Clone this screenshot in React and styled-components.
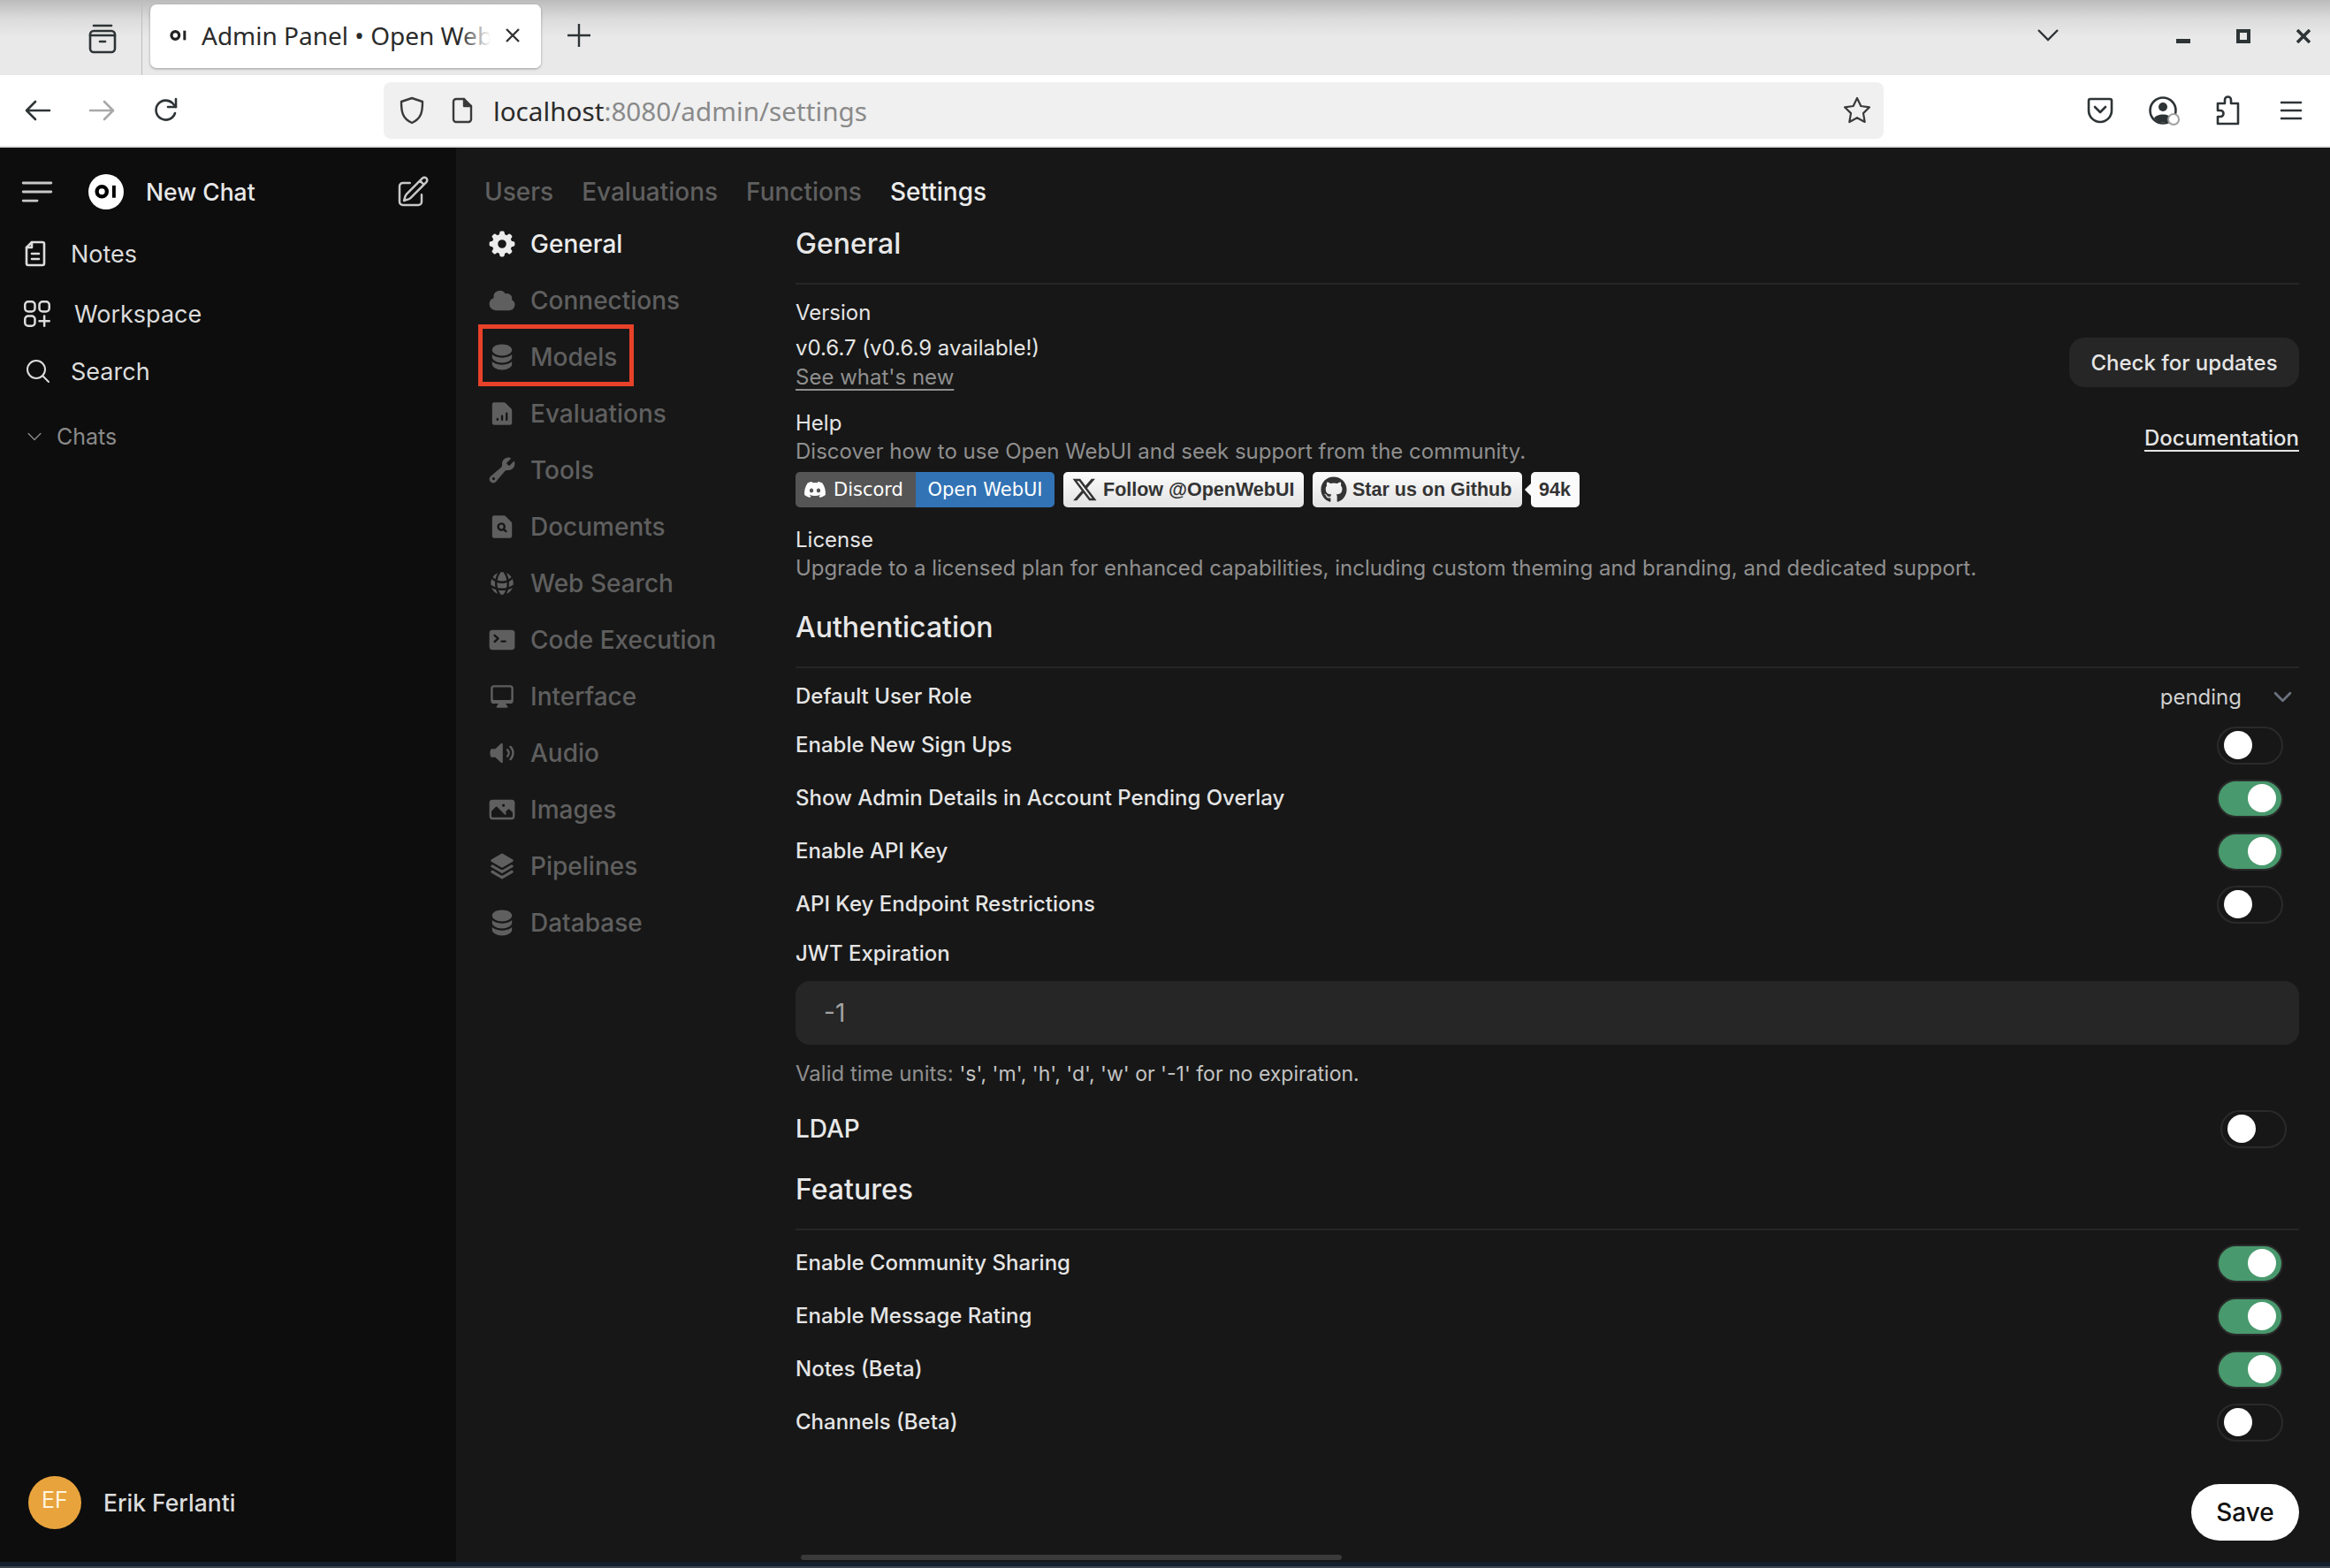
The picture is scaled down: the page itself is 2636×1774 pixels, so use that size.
import React from "react";
import styled, { createGlobalStyle } from "styled-components";
import {
  HiMiniCog8Tooth,
  HiMiniCloud,
  HiMiniCircleStack,
  HiMiniDocumentChartBar,
  HiMiniWrench,
  HiMiniDocumentMagnifyingGlass,
  HiMiniGlobeAlt,
  HiMiniCommandLine,
  HiMiniComputerDesktop,
  HiMiniSpeakerWave,
  HiMiniPhoto,
  HiMiniSquare3Stack3D,
  HiOutlineBars3BottomLeft,
  HiOutlinePencilSquare,
  HiOutlineMagnifyingGlass,
  HiOutlineChevronDown,
  HiOutlineSquaresPlus,
} from "react-icons/hi2";
import { FaDiscord, FaXTwitter, FaGithub } from "react-icons/fa6";

const GlobalStyle = createGlobalStyle`
  html, body { margin: 0; padding: 0; background: #171717; }
  * { box-sizing: border-box; }
  body { font-family: Inter, "Liberation Sans", sans-serif; }
`;

const Page = styled.div`
  width: 2636px;
  height: 1774px;
  display: flex;
  flex-direction: column;
  overflow: hidden;
`;

/* browser chrome */
const TitleBar = styled.div`
  height: 85px;
  display: flex;
  background: linear-gradient(#bcbcbc 0, #dcdcdc 22px, #e9e9e9 42px, #e9e9e9 100%);
  color: #2e3436;
`;

const TabGroups = styled.div`
  width: 161px;
  height: 85px;
  padding: 26px 0 0 98px;
  border-right: 1px solid #bdbdbd;
`;

const Tab = styled.div`
  position: relative;
  width: 442px;
  height: 72px;
  margin: 5px 0 0 9px;
  padding: 0 0 3px 22px;
  display: flex;
  align-items: center;
  gap: 16px;
  background: #fff;
  border-radius: 7px;
  box-shadow: 0 1px 3px rgba(0, 0, 0, 0.35);
  font-family: "Noto Sans", sans-serif;
  font-size: 28px;
  color: #2b2b2b;
  white-space: nowrap;
  overflow: hidden;
`;

const TabFade = styled.div`
  position: absolute;
  top: 0;
  right: 0;
  width: 92px;
  height: 100%;
  padding: 0 23px 3px 0;
  display: flex;
  align-items: center;
  justify-content: flex-end;
  background: linear-gradient(to right, rgba(255, 255, 255, 0), #fff 38%);
`;

const NewTab = styled.div`
  width: 88px;
  padding: 27px 0 0 30px;
`;

const TitleRight = styled.div`
  flex: 1;
  display: flex;
  justify-content: flex-end;
  align-items: flex-start;
  padding: 33px 22px 0 0;
  gap: 52px;
`;

const AllTabs = styled.div`
  margin-right: 81px;
  height: 14px;
  display: flex;
`;

const WinButton = styled.div`
  width: 16px;
  height: 16px;
  display: flex;
`;

const Toolbar = styled.div`
  height: 80px;
  background: #fff;
  display: flex;
  align-items: center;
  color: #2e3436;
`;

const NavIcons = styled.div`
  width: 434px;
  padding-left: 28px;
  display: flex;
  gap: 42px;
  align-items: center;
`;

const UrlBar = styled.div`
  width: 1697px;
  height: 64px;
  background: #f0f0f0;
  border-radius: 8px;
  display: flex;
  align-items: center;
  padding: 0 14px 0 17px;
  font-family: "Noto Sans", sans-serif;
  font-size: 29.7px;
  color: #8a8a8a;
`;

const UrlHost = styled.span`
  color: #2b2b2b;
`;

const UrlText = styled.div`
  flex: 1;
  margin-left: 23px;
`;

const PageIcon = styled.div`
  margin-left: 30px;
  display: flex;
`;

const ToolbarRight = styled.div`
  flex: 1;
  display: flex;
  justify-content: flex-end;
  padding-right: 8px;
`;

const ToolCell = styled.div`
  width: 72px;
  display: flex;
  align-items: center;
  justify-content: center;
`;

const ChromeLine = styled.div`
  height: 2px;
  background: #e0e0e0;
`;

/* app */
const Body = styled.div`
  height: 1600px;
  display: flex;
`;

const Sidebar = styled.aside`
  width: 516px;
  background: #0d0d0d;
  display: flex;
  flex-direction: column;
  color: #e5e5e5;
`;

const SideHead = styled.div`
  height: 100px;
  display: flex;
  align-items: center;
  padding: 0 29px 0 19px;
  color: #c8c8c8;
`;

const Logo = styled.div`
  width: 40px;
  height: 40px;
  margin-left: 35px;
  border-radius: 50%;
  background: #fff;
  display: flex;
  align-items: center;
  justify-content: center;
`;

const NewChat = styled.div`
  flex: 1;
  margin-left: 25px;
  font-size: 26.5px;
  font-weight: 500;
  color: #e8e8e8;
`;

const SideItem = styled.div`
  height: 40px;
  margin-top: ${({ $mt }) => $mt || 0}px;
  display: flex;
  align-items: center;
  padding-left: ${({ $pl }) => $pl || 28}px;
  gap: ${({ $gap }) => $gap}px;
  font-size: 27px;
  color: ${({ $dim }) => ($dim ? "#a3a3a3" : "#dcdcdc")};
  svg { flex: none; }
`;

const ChatsHead = styled.div`
  height: 40px;
  margin-top: 34px;
  padding-left: 28px;
  display: flex;
  align-items: center;
  gap: 14px;
  font-size: 25px;
  color: #8a8a8a;
`;

const SideSpacer = styled.div`
  flex: 1;
`;

const UserRow = styled.div`
  height: 60px;
  margin-bottom: 37px;
  padding-left: 32px;
  display: flex;
  align-items: center;
  gap: 25px;
  font-size: 26.5px;
  font-weight: 500;
  color: #dcdcdc;
`;

const Avatar = styled.div`
  width: 60px;
  height: 60px;
  border-radius: 50%;
  background: #e8a33c;
  color: #fff3dd;
  font-size: 25px;
  font-weight: 400;
  display: flex;
  align-items: center;
  justify-content: center;
  padding-bottom: 6px;
`;

const Main = styled.main`
  flex: 1;
  position: relative;
  background: #171717;
  padding: 0 35px 0 32px;
  display: flex;
  flex-direction: column;
`;

const TopTabs = styled.nav`
  height: 77px;
  padding-top: 32px;
  display: flex;
  gap: 32px;
  font-size: 28px;
  line-height: 36px;
  font-weight: 500;
`;

const TopTab = styled.div`
  color: ${({ $active }) => ($active ? "#ececec" : "#5f5f5f")};
`;

const Columns = styled.div`
  flex: 1;
  display: flex;
`;

const SettingsNav = styled.div`
  width: 352px;
  display: flex;
  flex-direction: column;
`;

const NavItem = styled.div`
  position: relative;
  height: 64px;
  display: flex;
  align-items: center;
  padding-left: 4px;
  gap: 16px;
  font-size: 28px;
  font-weight: 500;
  color: ${({ $active }) => ($active ? "#ececec" : "#5f5f5f")};
`;

const Highlight = styled.div`
  position: absolute;
  left: -7px;
  top: -5px;
  width: 176px;
  height: 70px;
  border: 5px solid #e8412a;
`;

const Content = styled.div`
  flex: 1;
  display: flex;
  flex-direction: column;
`;

const Heading = styled.h2`
  margin: ${({ $mt }) => $mt || 0}px 0 0;
  height: 64px;
  line-height: 64px;
  font-size: 32px;
  font-weight: 500;
  color: #e8e8e8;
`;

const Divider = styled.div`
  height: 2px;
  margin: 12px 0 ${({ $mb }) => $mb ?? 14}px;
  background: #262626;
`;

const Label = styled.div`
  height: ${({ $h }) => $h || 36}px;
  line-height: ${({ $h }) => $h || 36}px;
  margin-top: ${({ $mt }) => $mt || 0}px;
  font-size: 24px;
  font-weight: ${({ $w }) => $w || 400};
  color: ${({ $c }) => $c || "#e5e5e5"};
  white-space: nowrap;
`;

const SplitRow = styled.div`
  display: flex;
  align-items: center;
  justify-content: space-between;
  margin-top: ${({ $mt }) => $mt || 0}px;
`;

const Muted = styled.span`
  color: #8f8f8f;
  text-decoration: ${({ $u }) => ($u ? "underline" : "none")};
  text-underline-offset: 5px;
`;

const Units = styled.span`
  color: #c4c4c4;
  font-size: 23px;
`;

const GhostButton = styled.div`
  width: 260px;
  height: 56px;
  border-radius: 17px;
  background: #262626;
  color: #e5e5e5;
  font-size: 24px;
  font-weight: 500;
  display: flex;
  align-items: center;
  justify-content: center;
`;

const DocLink = styled.div`
  font-size: 24px;
  font-weight: 500;
  color: #e5e5e5;
  text-decoration: underline;
  text-underline-offset: 5px;
`;

const Badges = styled.div`
  display: flex;
  height: 40px;
  margin-top: 7px;
  margin-bottom: 21px;
`;

const DiscordBadge = styled.div`
  width: 293px;
  display: flex;
  border-radius: 5px;
  overflow: hidden;
  font-family: "DejaVu Sans", sans-serif;
  font-size: 21px;
  color: #fff;
`;

const BadgeLeft = styled.div`
  width: 136px;
  background: #555;
  display: flex;
  align-items: center;
  gap: 8px;
  padding-left: 9px;
`;

const BadgeRight = styled.div`
  flex: 1;
  background: #3273b5;
  display: flex;
  align-items: center;
  justify-content: center;
`;

const SocialBadge = styled.div`
  position: relative;
  width: ${({ $w }) => $w}px;
  margin-left: ${({ $ml }) => $ml}px;
  display: flex;
  align-items: center;
  gap: 6px;
  padding-left: ${({ $pl }) => $pl || 9}px;
  border-radius: 5px;
  background: linear-gradient(#fcfcfc, #e2e2e2);
  font-family: "Liberation Sans", sans-serif;
  font-weight: 700;
  font-size: 21.5px;
  color: #333;
  white-space: nowrap;
`;

const CountBadge = styled(SocialBadge)`
  background: #fafafa;
  &::before {
    content: "";
    position: absolute;
    left: -5px;
    top: 15px;
    width: 10px;
    height: 10px;
    background: #fafafa;
    transform: rotate(45deg);
  }
`;

const RowGap = styled.div`
  height: ${({ $h }) => $h}px;
`;

const SwitchRow = styled.div`
  height: 60px;
  display: flex;
  align-items: center;
  justify-content: space-between;
`;

const SwitchTrack = styled.div`
  width: 75px;
  height: 43px;
  margin-right: ${({ $mr }) => $mr ?? 18}px;
  border-radius: 22px;
  padding: 0 6px;
  display: flex;
  align-items: center;
  justify-content: ${({ $on }) => ($on ? "flex-end" : "flex-start")};
  background: ${({ $on }) => ($on ? "#48996d" : "transparent")};
  border: 2px solid #2a2a2a;
`;

const SwitchKnob = styled.div`
  width: 32px;
  height: 32px;
  border-radius: 50%;
  background: #fff;
`;

const RoleSelect = styled.div`
  display: flex;
  align-items: center;
  gap: 33px;
  padding-right: 5px;
  font-size: 24px;
  color: #cfcfcf;
  svg { color: #6b7280; stroke-width: 2.4; }
`;

const Input = styled.div`
  height: 72px;
  margin-top: 13px;
  border-radius: 16px;
  background: #262626;
  padding-left: 32px;
  display: flex;
  align-items: center;
  font-size: 28px;
  color: #a3a3a3;
`;

const LdapLabel = styled.div`
  font-size: 28px;
  font-weight: 500;
  color: #e8e8e8;
`;

const Footer = styled.div`
  display: flex;
  justify-content: flex-end;
  margin-top: 40px;
`;

const SaveButton = styled.div`
  width: 122px;
  height: 64px;
  border-radius: 32px;
  background: #fff;
  color: #111;
  font-size: 28px;
  font-weight: 500;
  display: flex;
  align-items: center;
  justify-content: center;
`;

const ScrollThumb = styled.div`
  position: absolute;
  left: 390px;
  bottom: 2px;
  width: 612px;
  height: 6px;
  border-radius: 3px;
  background: #3a3a3a;
`;

const BottomStrip = styled.div`
  flex: 1;
  background: #15202e;
  border-bottom: 2px solid #3a4550;
`;

/* drawn icons */
const line = { fill: "none", stroke: "currentColor", strokeWidth: 2, strokeLinecap: "round", strokeLinejoin: "round" };

const OiMark = ({ size, color }) => (
  <svg width={size} height={size * 0.6} viewBox="0 0 30 18" fill="none">
    <circle cx="9.5" cy="9" r="6.5" stroke={color} strokeWidth="5" />
    <rect x="23" y="1" width="4.5" height="16" fill={color} />
  </svg>
);

const TabGroupsIcon = () => (
  <svg width="36" height="36" viewBox="0 0 36 36" {...line} strokeWidth="2.6">
    <path d="M8 3h20" />
    <rect x="4" y="9" width="28" height="24" rx="4" />
    <path d="M4 14h28" />
    <path d="M15 21h6" />
  </svg>
);

const ArrowLeft = ({ dim }) => (
  <svg width="30" height="30" viewBox="0 0 30 30" {...line} strokeWidth="2.6" color={dim ? "#a8a8a8" : "#2e3436"}>
    <path d={dim ? "M2 15h25M18 5l10 10-10 10" : "M28 15H3M12 5 2 15l10 10"} />
  </svg>
);

const ReloadIcon = () => (
  <svg width="32" height="32" viewBox="0 0 32 32" {...line} strokeWidth="2.6">
    <path d="M26 19a11 11 0 1 1-3-11.5L27 12" />
    <path d="M27 3v9h-9" />
  </svg>
);

const ShieldIcon = () => (
  <svg width="30" height="32" viewBox="0 0 30 32" {...line} strokeWidth="2.4" color="#3a3a3a">
    <path d="M15 2 3 6c0 11 1 19 12 24 11-5 12-13 12-24z" />
  </svg>
);

const FileIcon = () => (
  <svg width="24" height="30" viewBox="0 0 24 30" {...line} strokeWidth="2.4" color="#3a3a3a">
    <path d="M5 2h9l8 8v15a3 3 0 0 1-3 3H5a3 3 0 0 1-3-3V5a3 3 0 0 1 3-3z" />
    <path d="M14 2v8h8" fill="currentColor" />
  </svg>
);

const StarIcon = () => (
  <svg width="32" height="32" viewBox="0 0 32 32" {...line} strokeWidth="2.2" color="#3a3a3a">
    <path d="m16 2 4.3 9 9.7 1.3-7 6.8 1.7 9.9L16 24.2 7.3 29 9 19.100l-7-6.800 9.700-1.300z" />
  </svg>
);

const PocketIcon = () => (
  <svg width="30" height="32" viewBox="0 0 30 32" {...line} strokeWidth="2.6">
    <path d="M4 3h22a2 2 0 0 1 2 2v11a13 13 0 0 1-26 0V5a2 2 0 0 1 2-2z" />
    <path d="m9 12 6 6 6-6" />
  </svg>
);

const ProfileIcon = () => (
  <svg width="38" height="34" viewBox="-2 0 38 34">
    <circle cx="16" cy="17" r="14.5" fill="none" stroke="currentColor" strokeWidth="2.6" />
    <circle cx="16" cy="13" r="5" fill="currentColor" />
    <path d="M6 26c2-6 18-6 20 0l-5 4H11z" fill="currentColor" />
    <circle cx="28" cy="27" r="6" fill="#fff" stroke="#a0a0a0" strokeWidth="2" />
  </svg>
);

const PuzzleIcon = () => (
  <svg width="30" height="34" viewBox="0 0 30 34" {...line} strokeWidth="2.6">
    <path d="M12 9V5a3.5 3.5 0 0 1 7 0v4h8v23H4v-8h3a3.5 3.5 0 0 0 0-7H4V9z" />
  </svg>
);

const MenuIcon = () => (
  <svg width="26" height="26" viewBox="0 0 26 26" fill="none" stroke="currentColor" strokeWidth="2.6">
    <path d="M1 4h24M1 13h24M1 22h24" />
  </svg>
);

const NotesIcon = () => (
  <svg width="24" height="30" viewBox="0 0 24 30" {...line} strokeWidth="2.6">
    <path d="M8 2h12a2 2 0 0 1 2 2v22a2 2 0 0 1-2 2H4a2 2 0 0 1-2-2V8z" />
    <path d="M8 2v6H2" />
    <path d="M8 15h8M8 21h8" />
  </svg>
);

const navItems = [
  ["General", HiMiniCog8Tooth],
  ["Connections", HiMiniCloud],
  ["Models", HiMiniCircleStack],
  ["Evaluations", HiMiniDocumentChartBar],
  ["Tools", HiMiniWrench],
  ["Documents", HiMiniDocumentMagnifyingGlass],
  ["Web Search", HiMiniGlobeAlt],
  ["Code Execution", HiMiniCommandLine],
  ["Interface", HiMiniComputerDesktop],
  ["Audio", HiMiniSpeakerWave],
  ["Images", HiMiniPhoto],
  ["Pipelines", HiMiniSquare3Stack3D],
  ["Database", HiMiniCircleStack],
];

const Toggle = ({ on, mr }) => (
  <SwitchTrack $on={on} $mr={mr}>
    <SwitchKnob />
  </SwitchTrack>
);

const ToggleRow = ({ label, on }) => (
  <SwitchRow>
    <Label $w={500}>{label}</Label>
    <Toggle on={on} />
  </SwitchRow>
);

const App = () => (
  <Page>
    <GlobalStyle />
    <TitleBar>
      <TabGroups>
        <TabGroupsIcon />
      </TabGroups>
      <Tab>
        <OiMark size={20} color="#222" />
        Admin Panel • Open WebUI
        <TabFade>
          <svg width="18" height="18" viewBox="0 0 18 18" stroke="#333" strokeWidth="2.4">
            <path d="m2 2 14 14M16 2 2 16" />
          </svg>
        </TabFade>
      </Tab>
      <NewTab>
        <svg width="26" height="26" viewBox="0 0 26 26" stroke="#2e3436" strokeWidth="2.4">
          <path d="M13 0v26M0 13h26" />
        </svg>
      </NewTab>
      <TitleRight>
        <AllTabs>
          <svg width="24" height="14" viewBox="0 0 24 14" fill="none" stroke="#2e3436" strokeWidth="2.4">
            <path d="m1 1 11 11L23 1" />
          </svg>
        </AllTabs>
        <WinButton>
          <svg width="16" height="16" viewBox="0 0 16 16" fill="#2e3436">
            <rect x="0" y="11" width="16" height="5" />
          </svg>
        </WinButton>
        <WinButton>
          <svg width="16" height="16" viewBox="0 0 16 16" fill="none" stroke="#2e3436" strokeWidth="4">
            <rect x="2" y="2" width="12" height="12" />
          </svg>
        </WinButton>
        <WinButton>
          <svg width="16" height="16" viewBox="0 0 16 16" fill="none" stroke="#2e3436" strokeWidth="3.6">
            <path d="m1 1 14 14M15 1 1 15" />
          </svg>
        </WinButton>
      </TitleRight>
    </TitleBar>
    <Toolbar>
      <NavIcons>
        <ArrowLeft />
        <ArrowLeft dim />
        <ReloadIcon />
      </NavIcons>
      <UrlBar>
        <ShieldIcon />
        <PageIcon>
          <FileIcon />
        </PageIcon>
        <UrlText>
          <UrlHost>localhost</UrlHost>:8080/admin/settings
        </UrlText>
        <StarIcon />
      </UrlBar>
      <ToolbarRight>
        <ToolCell><PocketIcon /></ToolCell>
        <ToolCell><ProfileIcon /></ToolCell>
        <ToolCell><PuzzleIcon /></ToolCell>
        <ToolCell><MenuIcon /></ToolCell>
      </ToolbarRight>
    </Toolbar>
    <ChromeLine />
    <Body>
      <Sidebar>
        <SideHead>
          <HiOutlineBars3BottomLeft size={46} />
          <Logo>
            <OiMark size={26} color="#000" />
          </Logo>
          <NewChat>New Chat</NewChat>
          <HiOutlinePencilSquare size={40} />
        </SideHead>
        <SideItem $gap={28}>
          <NotesIcon />
          Notes
        </SideItem>
        <SideItem $mt={28} $gap={22} $pl={22}>
          <HiOutlineSquaresPlus size={40} />
          Workspace
        </SideItem>
        <SideItem $mt={25} $gap={21} $pl={27}>
          <HiOutlineMagnifyingGlass size={32} />
          Search
        </SideItem>
        <ChatsHead>
          <HiOutlineChevronDown size={22} />
          Chats
        </ChatsHead>
        <SideSpacer />
        <UserRow>
          <Avatar>EF</Avatar>
          Erik Ferlanti
        </UserRow>
      </Sidebar>
      <Main>
        <TopTabs>
          <TopTab>Users</TopTab>
          <TopTab>Evaluations</TopTab>
          <TopTab>Functions</TopTab>
          <TopTab $active>Settings</TopTab>
        </TopTabs>
        <Columns>
          <SettingsNav>
            {navItems.map(([label, Icon], i) => (
              <NavItem key={label} $active={i === 0}>
                <Icon size={32} />
                {label}
                {label === "Models" && <Highlight />}
              </NavItem>
            ))}
          </SettingsNav>
          <Content>
            <Heading>General</Heading>
            <Divider />
            <Label>Version</Label>
            <SplitRow $mt={5}>
              <div>
                <Label $h={33}>v0.6.7 (v0.6.9 available!)</Label>
                <Label $h={33}>
                  <Muted $u>See what's new</Muted>
                </Label>
              </div>
              <GhostButton>Check for updates</GhostButton>
            </SplitRow>
            <SplitRow $mt={20}>
              <div>
                <Label $h={32}>Help</Label>
                <Label $h={32} $c="#8f8f8f">
                  Discover how to use Open WebUI and seek support from the community.
                </Label>
              </div>
              <DocLink>Documentation</DocLink>
            </SplitRow>
            <Badges>
              <DiscordBadge>
                <BadgeLeft>
                  <FaDiscord size={26} />
                  Discord
                </BadgeLeft>
                <BadgeRight>Open WebUI</BadgeRight>
              </DiscordBadge>
              <SocialBadge $w={272} $ml={10}>
                <FaXTwitter size={30} />
                Follow @OpenWebUI
              </SocialBadge>
              <SocialBadge $w={237} $ml={10}>
                <FaGithub size={30} />
                Star us on Github
              </SocialBadge>
              <CountBadge $w={55} $ml={10}>
                94k
              </CountBadge>
            </Badges>
            <Label $h={32}>License</Label>
            <Label $h={32} $c="#8f8f8f">
              Upgrade to a licensed plan for enhanced capabilities, including custom theming and branding, and dedicated support.
            </Label>
            <Heading $mt={19}>Authentication</Heading>
            <Divider />
            <SplitRow>
              <Label $w={500}>Default User Role</Label>
              <RoleSelect>
                pending
                <HiOutlineChevronDown size={27} />
              </RoleSelect>
            </SplitRow>
            <RowGap $h={7} />
            <ToggleRow label="Enable New Sign Ups" />
            <ToggleRow label="Show Admin Details in Account Pending Overlay" on />
            <ToggleRow label="Enable API Key" on />
            <ToggleRow label="API Key Endpoint Restrictions" />
            <Label $mt={8} $w={500}>JWT Expiration</Label>
            <Input>-1</Input>
            <Label $mt={15}>
              <Muted>Valid time units: </Muted>
              <Units>'s', 'm', 'h', 'd', 'w' or '-1' for no expiration.</Units>
            </Label>
            <RowGap $h={14} />
            <SwitchRow>
              <LdapLabel>LDAP</LdapLabel>
              <Toggle mr={14} />
            </SwitchRow>
            <Heading $mt={7}>Features</Heading>
            <Divider $mb={7} />
            <ToggleRow label="Enable Community Sharing" on />
            <ToggleRow label="Enable Message Rating" on />
            <ToggleRow label="Notes (Beta)" on />
            <ToggleRow label="Channels (Beta)" />
            <Footer>
              <SaveButton>Save</SaveButton>
            </Footer>
          </Content>
        </Columns>
        <ScrollThumb />
      </Main>
    </Body>
    <BottomStrip />
  </Page>
);

export default App;
